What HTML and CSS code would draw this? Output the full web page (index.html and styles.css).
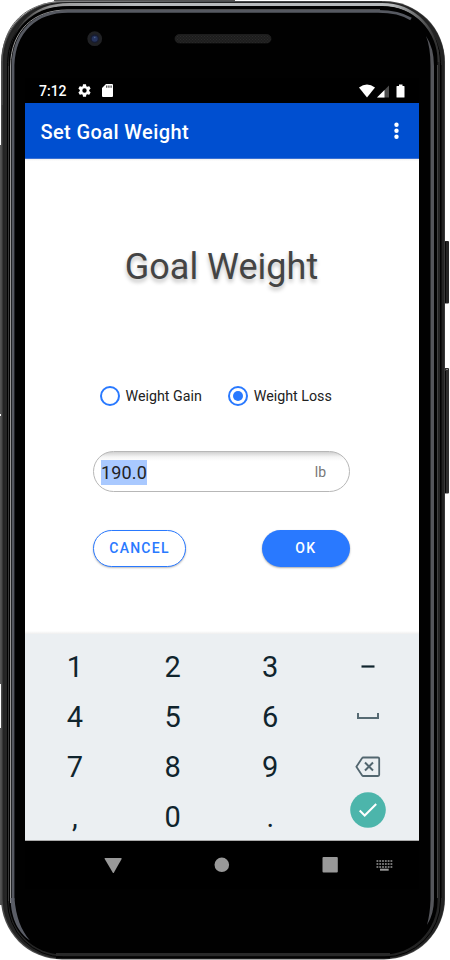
FILE: index.html
```html
<!DOCTYPE html>
<html lang="en">
<head>
<meta charset="utf-8">
<title>Set Goal Weight</title>
<link rel="stylesheet" href="styles.css">
</head>
<body>
<main class="phone">
  <svg class="frame" viewBox="0 0 450 960" aria-hidden="true">
    <defs>
      <linearGradient id="rim" x1="0" x2="1" y1="0" y2="0">
        <stop offset="0" stop-color="#555"/><stop offset=".15" stop-color="#858585"/><stop offset=".55" stop-color="#4b4e50"/><stop offset="1" stop-color="#333"/>
      </linearGradient>
      <linearGradient id="shine" gradientUnits="userSpaceOnUse" x1="8" x2="435" y1="0" y2="0">
        <stop offset="0" stop-color="#888" stop-opacity="0"/><stop offset=".1" stop-color="#999"/><stop offset=".3" stop-color="#b7babc"/><stop offset=".9" stop-color="#b7babc"/><stop offset="1" stop-color="#333"/>
      </linearGradient>
      <pattern id="mesh" width="3" height="3" patternUnits="userSpaceOnUse">
        <rect width="3" height="3" fill="#1d1d1d"/><path d="M0 0h1v1H0zM1.500 1.500h1v1h-1z" fill="#2b2b2b"/>
      </pattern>
    </defs>
    <path d="M54 0H235V1H54zM0 145h2v269H0zM0 416h2v268H0zM0 728h2v177H0z" fill="#555"/>
    <rect x="444" y="241" width="5" height="62.500" rx="1" fill="#252525"/>
    <rect x="444" y="368" width="5" height="125.500" rx="1" fill="#303030"/>
    <path d="M445.500 371v122M445.500 242v61" stroke="#080808"/>
    <path d="M446 369.500h2" stroke="#888" stroke-width="1"/>
    <rect x="1" y="1" width="444" height="958.500" rx="61" fill="#4c4c4c"/>
    <rect x="2.500" y="2" width="442" height="956.500" rx="60" fill="#232323"/>
    <path d="M2 105V62C2 24 27 1.500 65 1.500H382" fill="none" stroke="url(#rim)"/>
    <rect x="5.500" y="4.500" width="434.500" height="949" rx="57" fill="none" stroke="#262626" stroke-width="2"/>
    <rect x="7.500" y="6.500" width="433" height="950.500" rx="56" fill="none" stroke="#020202"/>
    <path d="M8.500 70C10 30 30 4.500 70 4.500H382C413 4.500 438 28 438 62" fill="none" stroke="url(#shine)" stroke-width="3"/>
    <rect x="9" y="6.500" width="428.500" height="948" rx="54" fill="#010101"/>
    <path d="M56 954.500H390" stroke="#292929" stroke-width="3"/>
    <path d="M56 957.500H390" stroke="#020202" stroke-width="2"/>
    <path d="M8.500 901V66" stroke="#393939"/>
    <path d="M10.500 903V66C11 30 34 10 67 10H380" fill="none" stroke="#999"/>
    <path d="M13 900V65C14 31 36 11.300 68 11.300H378Q399 11.300 411 19" fill="none" stroke="#565961" stroke-width="2.800"/>
    <path d="M10.500 898C11 920 19 933 30 940.500C21 930 16 917 14.400 898Z" fill="#5a5d66"/>
    <path d="M426 36Q434 48 434 66V899Q434 914 427 925Q430 914 430.500 900V66Q430.500 47 426 36Z" fill="#55565b"/>
    <path d="M437.500 65V898" stroke="#444"/>
    <path d="M441.500 65V898" stroke="#111"/>
    <circle cx="94.700" cy="38.700" r="7.400" fill="#202124"/><circle cx="94.700" cy="38.700" r="4.400" fill="#171c30"/><circle cx="94.700" cy="38.700" r="3" fill="#25335d"/><circle cx="94.700" cy="37.500" r=".8" fill="#506388"/>
    <rect x="175" y="34.500" width="96" height="8.500" rx="4.200" fill="url(#mesh)" stroke="#222" stroke-width=".7"/>
  </svg>

  <div class="display">
    <div class="status">
      <span class="time">7:12</span>
      <svg class="gear" viewBox="0 0 24 24" fill="#fff"><path fill-rule="evenodd" d="M19.430 12.980c.04-.32.07-.64.07-.98s-.03-.66-.07-.98l2.110-1.650c.19-.15.24-.42.12-.64l-2-3.460c-.12-.22-.39-.3-.61-.22l-2.490 1c-.52-.4-1.080-.73-1.690-.98l-.38-2.650C14.460 2.180 14.250 2 14 2h-4c-.25 0-.46.18-.49.42l-.38 2.650c-.61.25-1.170.59-1.690.98l-2.490-1c-.23-.09-.49 0-.61.22l-2 3.460c-.13.22-.07.49.12.64l2.110 1.650c-.04.32-.07.65-.07.98s.03.66.07.98l-2.110 1.650c-.19.15-.24.42-.12.64l2 3.460c.12.22.39.3.61.22l2.490-1c.52.4 1.080.73 1.690.98l.38 2.650c.03.24.24.42.49.42h4c.25 0 .46-.18.49-.42l.38-2.650c.61-.25 1.170-.59 1.690-.98l2.490 1c.23.09.49 0 .61-.22l2-3.460c.12-.22.07-.49-.12-.64zM12 15.500a3.500 3.500 0 1 1 0-7 3.500 3.500 0 0 1 0 7z"/></svg>
      <svg class="card" viewBox="0 0 11 13"><path d="M4 0h6q1 0 1 1v11q0 1-1 1H1q-1 0-1-1V4z" fill="#fff"/><path d="M4 1.500h1.400v2.300H4zM6.200 1.500h1.400v2.300H6.200zM8.400 1.500h1.400v2.300H8.400z" fill="#555"/></svg>
      <svg class="signals" viewBox="0 0 46 14"><path d="M0 3.500Q8-2.500 16 3.500L8 13.500z" fill="#fff"/><path d="M18 13.500L30 1.500v12z" fill="#4c4c4c"/><path d="M18 13.500L25.500 6v7.500z" fill="#fff"/><path d="M38 2h2V.5h3.500V2H45q.5 0 .5.500v10.500q0 .5-.5.500h-7q-.5 0-.5-.5V2.500q0-.5.5-.5z" fill="#fff"/></svg>
    </div>
    <header class="appbar">
      <h1>Set Goal Weight</h1>
      <svg class="more" viewBox="0 0 5 18" fill="#fff"><circle cx="2.500" cy="2.700" r="2.200"/><circle cx="2.500" cy="8.700" r="2.200"/><circle cx="2.500" cy="14.700" r="2.200"/></svg>
    </header>
    <section class="content">
      <h2>Goal Weight</h2>
      <div class="choices">
        <div class="choice"><span class="radio"></span><span>Weight Gain</span></div>
        <div class="choice"><span class="radio checked"></span><span>Weight Loss</span></div>
      </div>
      <div class="field"><span class="value">190.0</span><span class="unit">lb</span></div>
      <div class="actions"><button class="cancel">CANCEL</button><button class="ok">OK</button></div>
    </section>
    <section class="keypad">
      <span>1</span><span>2</span><span>3</span><span><svg width="26" height="30"><path d="M6.500 14.500h13" stroke="#10242d" stroke-width="2.200"/></svg></span>
      <span>4</span><span>5</span><span>6</span><span><svg width="26" height="30"><path d="M3 11v5h20v-5" fill="none" stroke="#566a73" stroke-width="2"/></svg></span>
      <span>7</span><span>8</span><span>9</span><span><svg width="26" height="30" fill="none" stroke="#52666f" stroke-width="1.800"><path d="M8.300 5.500H23q1.200 0 1.200 1.200v16.100q0 1.200-1.200 1.200H8.300Q7.500 24 7 23.200L1.400 14.700 7 6.300q.5-.8 1.300-.8z"/><path d="M10 10.500l8 8M18 10.500l-8 8" stroke-width="2"/></svg></span>
      <span>,</span><span>0</span><span>.</span><span class="done"><svg width="36" height="36"><circle cx="18" cy="18" r="17.800" fill="#4cb5ab"/><path d="M9.700 18.500l5 5L26.200 12" fill="none" stroke="#fff" stroke-width="2"/></svg></span>
    </section>
    <nav class="navbar">
      <svg viewBox="0 0 394 48" fill="#999"><path d="M80 17h16q1 0 .6.900L89 31.500q-.7 1-1.300 0l-8-13.600q-.4-.9.300-.9z"/><circle cx="196.800" cy="23.800" r="7.300"/><rect x="297.500" y="16" width="15.300" height="15.500" rx="1"/><path d="M351.500 20h15.800M351.500 23h15.800M351.500 26h15.800" stroke="#999" stroke-width="1.700" stroke-dasharray="1.800 1"/><path d="M355 27.700h8.700v2H355z"/></svg>
    </nav>
  </div>
</main>
</body>
</html>
```

FILE: styles.css
```css
* { box-sizing: border-box; }
body { margin: 0; background: #fff; font-family: Roboto, sans-serif; }
svg { display: block; }
h1, h2 { margin: 0; }
.phone { position: relative; width: 450px; height: 960px; padding: 78px 31px 0 25px; overflow: hidden; }
.frame { position: absolute; inset: 0; width: 450px; height: 960px; }
.display { position: relative; width: 394px; height: 811px; background: #000; }
.status { display: flex; align-items: center; height: 24.500px; padding: 1px 14px 0; color: #fff; }
.time { width: 39px; font-size: 14px; font-weight: 500; }
.gear { width: 15px; height: 15px; margin-left: -1px; }
.card { width: 11px; height: 13px; margin-left: 9.500px; }
.signals { width: 46px; height: 14px; margin-left: auto; }
.appbar { display: flex; align-items: center; justify-content: space-between; height: 56.500px; padding: 3px 20px 0 15.500px; background: #004fd0; border-bottom: 1px solid #3970d4; color: #fff; }
.appbar h1 { font-size: 20px; line-height: 24px; font-weight: 500; letter-spacing: .4px; }
.more { width: 5px; height: 18px; margin-top: -2px; }
.content { height: 475px; padding: 85px 69px 0 68px; background: linear-gradient(#eee, #fff 2px, #fff 472px, #eee 475px); }
.content h2 { font-size: 36px; font-weight: 400; line-height: 47px; text-align: center; color: #444; white-space: nowrap; text-shadow: 0 3px 4px #bbb; letter-spacing: 0; }
.choices { display: flex; gap: 26px; margin: 94px 0 0 6.500px; }
.choice { display: flex; align-items: center; gap: 6px; height: 22px; font-size: 14.250px; color: #222; white-space: nowrap; }
.radio { display: flex; align-items: center; justify-content: center; width: 20px; height: 20px; border: 2px solid #2979ff; border-radius: 50%; }
.checked::after { content: ""; width: 10px; height: 10px; border-radius: 50%; background: #2979ff; }
.field { display: flex; align-items: center; justify-content: space-between; height: 41px; margin-top: 44px; padding: 1px 23px 0 7px; border: 1px solid #b7b7b7; border-radius: 21px; background: linear-gradient(#d0d0d0, #f5f5f5 5px, #fff 9px); }
.value { height: 25px; line-height: 26px; background: #a9c9ff; color: #222; font-size: 18px; letter-spacing: .15px; }
.unit { font-size: 14px; color: #777; }
.actions { display: flex; justify-content: space-between; margin-top: 38px; }
.actions button { height: 36.500px; padding: 0; border-radius: 19px; font: 500 14px Roboto, sans-serif; letter-spacing: 1.250px; }
.cancel { width: 93px; border: 1px solid #2979ff; background: #fff; color: #2979ff; box-shadow: 0 1px 2px #bbb; }
.ok { width: 88.500px; border: 0; background: #2979ff; color: #fff; box-shadow: 0 1px 2px #aaa; }
.keypad { display: grid; grid-template-columns: repeat(4, 97.700px); grid-template-rows: repeat(4, 50px); height: 207px; padding: 8px 0 0 1px; overflow: hidden; background: #ebeff2; border-bottom: 1px solid #aaa; color: #10242d; font-size: 29px; }
.keypad span { display: flex; align-items: center; justify-content: center; }
.keypad .done { align-items: flex-start; }
.navbar { height: 48px; }
.navbar svg { width: 394px; height: 48px; }
```
